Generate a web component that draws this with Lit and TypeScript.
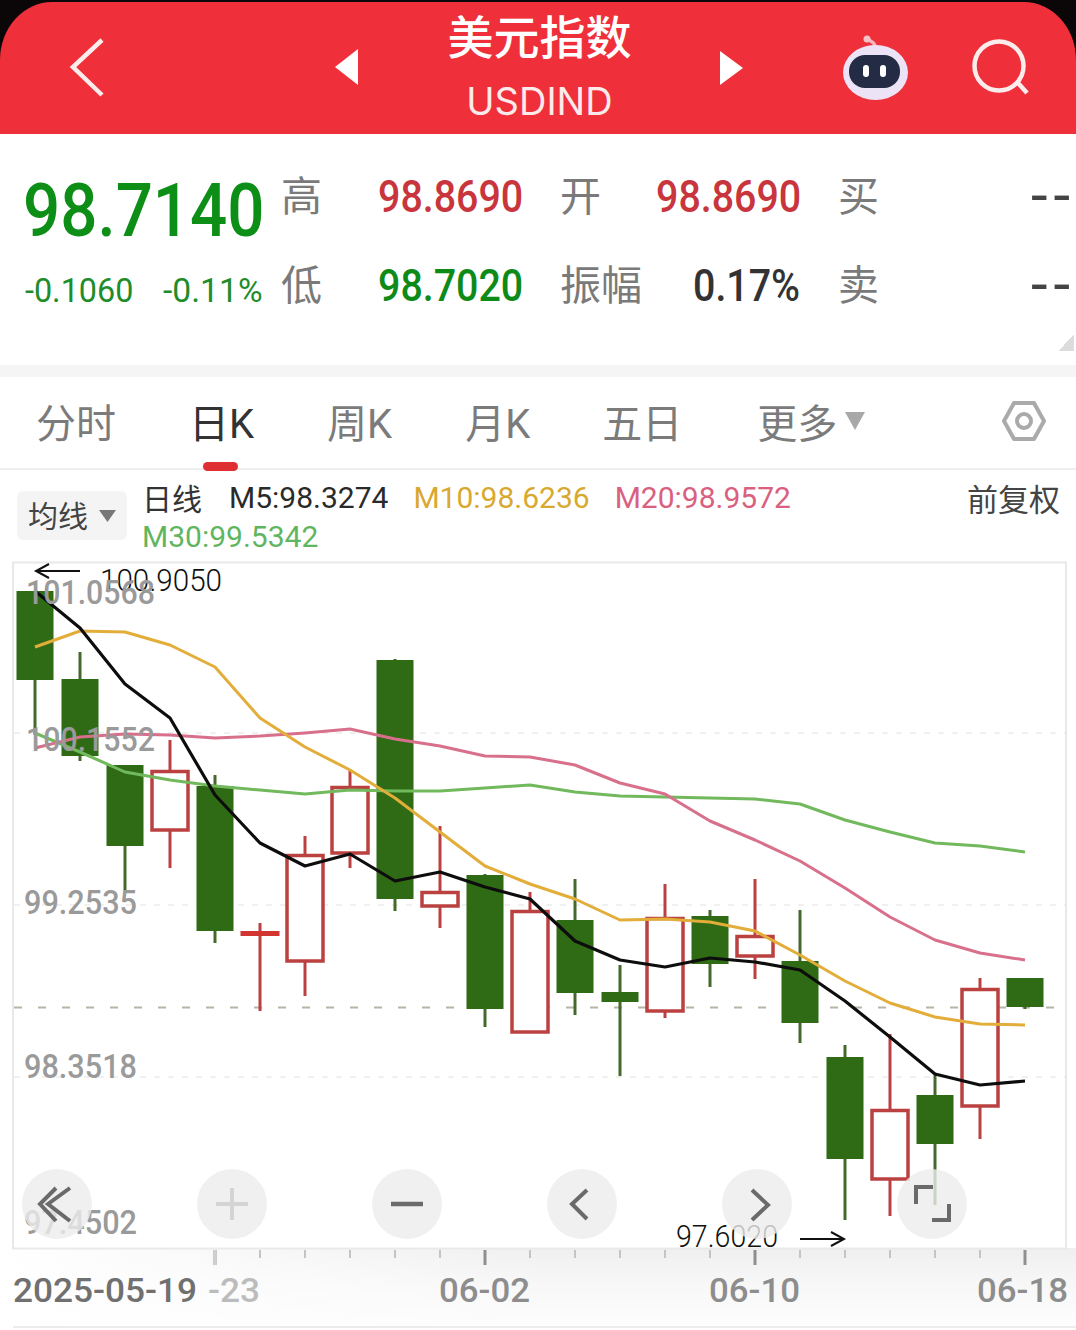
import { LitElement, html, css, svg } from "lit";
import { customElement } from "lit/decorators.js";

type Candle = [number, number, number, number, "g" | "r"];
const candles: Candle[] = [
  [591, 591, 680, 735, "g"],
  [652, 679, 756, 761, "g"],
  [765, 765, 846, 890, "g"],
  [740, 770, 830, 868, "r"],
  [775, 786, 931, 943, "g"],
  [923, 931, 936, 1011, "r"],
  [836, 854, 961, 996, "r"],
  [770, 786, 853, 868, "r"],
  [659, 660, 899, 911, "g"],
  [826, 891, 906, 928, "r"],
  [874, 875, 1009, 1027, "g"],
  [892, 910, 1032, 1032, "r"],
  [879, 920, 993, 1015, "g"],
  [965, 992, 1002, 1076, "g"],
  [884, 917, 1011, 1018, "r"],
  [910, 916, 964, 987, "g"],
  [879, 935, 956, 979, "r"],
  [910, 961, 1023, 1043, "g"],
  [1045, 1057, 1159, 1220, "g"],
  [1034, 1109, 1179, 1216, "r"],
  [1075, 1095, 1144, 1205, "g"],
  [978, 988, 1106, 1139, "r"],
  [978, 978, 1007, 1009, "g"],
];
const cx = (i: number) => 35 + i * 45;
const m5 = [591, 628, 684, 718, 795, 843, 866, 854, 881, 872, 887, 899, 941, 960, 967, 958, 962, 970, 1001, 1037, 1074, 1085, 1081];
const m10 = [647, 631, 632, 645, 667, 718, 747, 770, 798, 832, 866, 884, 899, 920, 919, 922, 931, 955, 981, 1003, 1017, 1024, 1025];
const m20 = [748, 737, 734, 735, 738, 736, 733, 729, 739, 746, 756, 757, 765, 783, 794, 821, 840, 861, 888, 917, 940, 953, 960];
const m30 = [733, 752, 772, 780, 786, 790, 794, 790, 791, 791, 788, 785, 792, 796, 797, 798, 799, 804, 820, 832, 843, 846, 852];
const pts = (a: number[]) => a.map((y, i) => `${cx(i)},${y}`).join(" ");

@customElement("k-chart")
class KChart extends LitElement {
  static styles = css`
    :host { display: block; }
    svg { display: block; }
    .axis { font-family: Roboto, sans-serif; fill: #9a9a9a; font-size: 33px; font-weight: 500; }
    .mark { font-family: Roboto, sans-serif; fill: #111; font-size: 31px; font-weight: 300; }
    .date { font-family: Roboto, sans-serif; fill: #8d8d8d; font-size: 33px; font-weight: 500; }
    .date.dark { fill: #707070; }
    .date.ghost { fill: #bcbcbc; }
  `;
  render() {
    const buttons = [57, 232, 407, 582, 757, 932];
    return html`<svg width="1076" height="770" viewBox="0 560 1076 770">
      <defs>
        <linearGradient id="strip" x1="0" y1="0" x2="0" y2="1">
          <stop offset="0" stop-color="#efefef" />
          <stop offset="0.45" stop-color="#f7f7f7" />
          <stop offset="1" stop-color="#fdfdfd" />
        </linearGradient>
        <linearGradient id="fade" x1="0" y1="0" x2="1" y2="0">
          <stop offset="0" stop-color="#fff" stop-opacity="1" />
          <stop offset="1" stop-color="#fff" stop-opacity="0" />
        </linearGradient>
      </defs>
      <rect x="0" y="1248" width="1076" height="78" fill="url(#strip)" />
      <rect x="0" y="1248" width="560" height="78" fill="url(#fade)" />
      <rect x="13" y="562.5" width="1053" height="686" fill="#fff" stroke="#e9e9e9" stroke-width="2" />
      ${[733, 905, 1077].map(
        (y) => svg`<line x1="14" x2="1065" y1=${y} y2=${y} stroke="#ebebeb" stroke-width="1.5" stroke-dasharray="6 8" />`
      )}
      <line x1="14" x2="1065" y1="1007.5" y2="1007.5" stroke="#b5b5a8" stroke-width="2" stroke-dasharray="8 16" />
      ${candles.map(([hi, top, bot, lo, c], i) => {
        const x = cx(i);
        const col = c === "g" ? "#2f6b14" : "#bb4040";
        const wick = c === "g" ? "#44692c" : "#bb4040";
        const flat = bot - top < 8;
        return svg`
          <line x1=${x} x2=${x} y1=${hi} y2=${lo} stroke=${wick} stroke-width="3" />
          ${c === "g"
            ? svg`<rect x=${x - 18.5} y=${top} width="37" height=${bot - top} fill=${col} />`
            : flat
              ? svg`<rect x=${x - 19.5} y=${top} width="39" height=${bot - top} fill="#d2342f" />`
              : svg`<rect x=${x - 18} y=${top + 1.5} width="36" height=${bot - top - 1.5} fill="#fff" stroke=${col} stroke-width="3.5" />`}
        `;
      })}
      <polyline points=${pts(m30)} fill="none" stroke="#71b95c" stroke-width="3" stroke-linejoin="round" />
      <polyline points=${pts(m20)} fill="none" stroke="#d8708c" stroke-width="3" stroke-linejoin="round" />
      <polyline points=${pts(m10)} fill="none" stroke="#e2ad38" stroke-width="3" stroke-linejoin="round" />
      <polyline points=${pts(m5)} fill="none" stroke="#0d0d0d" stroke-width="3.2" stroke-linejoin="round" />

      <path d="M80 571H36M49 564L36 571L49 578" fill="none" stroke="#111" stroke-width="2" />
      <text class="mark" x="100" y="591" textLength="122" lengthAdjust="spacingAndGlyphs">100.9050</text>
      <text class="mark" x="676" y="1247" textLength="102" lengthAdjust="spacingAndGlyphs">97.6020</text>
      <path d="M800 1239H844M831 1232L844 1239L831 1246" fill="none" stroke="#111" stroke-width="2" />

      <text class="axis" x="26" y="604" textLength="129" lengthAdjust="spacingAndGlyphs">101.0568</text>
      <text class="axis" x="26" y="751" textLength="129" lengthAdjust="spacingAndGlyphs">100.1552</text>
      <text class="axis" x="24" y="914" textLength="113" lengthAdjust="spacingAndGlyphs">99.2535</text>
      <text class="axis" x="24" y="1078" textLength="113" lengthAdjust="spacingAndGlyphs">98.3518</text>
      <text class="axis" x="24" y="1234" textLength="113" lengthAdjust="spacingAndGlyphs">97.4502</text>

      ${candles.map((_, i) => {
        if (i < 4) return null;
        const big = (i - 4) % 6 === 0;
        return svg`<line x1=${cx(i)} x2=${cx(i)} y1="1250" y2=${big ? 1265 : 1258} stroke=${big ? "#8f8f8f" : "#c4c4c4"} stroke-width=${big ? 3 : 2} />`;
      })}
      <line x1="215" x2="215" y1="1250" y2="1265" stroke="#d0d0d0" stroke-width="3" />

      <text class="date dark" x="13" y="1302" textLength="184" lengthAdjust="spacingAndGlyphs">2025-05-19</text>
      <text class="date ghost" x="208" y="1302" textLength="52" lengthAdjust="spacingAndGlyphs">-23</text>
      <text class="date" x="439" y="1302" textLength="91" lengthAdjust="spacingAndGlyphs">06-02</text>
      <text class="date" x="709" y="1302" textLength="91" lengthAdjust="spacingAndGlyphs">06-10</text>
      <text class="date" x="977" y="1302" textLength="91" lengthAdjust="spacingAndGlyphs">06-18</text>
      <line x1="13" x2="1076" y1="1327" y2="1327" stroke="#ececec" stroke-width="2" />

      ${buttons.map((x) => svg`<circle cx=${x} cy="1204" r="35" fill="#ececec" fill-opacity="0.8" />`)}
      <path d="M70 1188L48 1204L70 1221M56 1188L40 1204L56 1221" fill="none" stroke="#6a6a6a" stroke-width="4" />
      <path d="M216 1204H248M232 1188V1220" fill="none" stroke="#d4d4d4" stroke-width="4" />
      <path d="M391 1204H423" fill="none" stroke="#6a6a6a" stroke-width="4.5" />
      <path d="M587 1190L572 1204L587 1219" fill="none" stroke="#6a6a6a" stroke-width="4" />
      <path d="M752 1190L768 1205L752 1220" fill="none" stroke="#6a6a6a" stroke-width="4" />
      <path d="M916 1204V1187H933M949 1204V1220H932" fill="none" stroke="#6a6a6a" stroke-width="4" />
    </svg>`;
  }
}

@customElement("app-root")
export class AppRoot extends LitElement {
  static styles = css`
    :host {
      display: block;
      width: 1076px;
      height: 1330px;
      overflow: hidden;
      background: #fff;
      font-family: Roboto, "Noto Sans CJK SC", sans-serif;
    }
    .top { background: #0b0607; padding-top: 2px; }
    .header {
      height: 132px;
      background: #ef2f3a;
      border-radius: 52px 52px 0 0 / 58px 58px 0 0;
      display: flex;
      color: #fff;
    }
    .header svg { display: block; flex: none; }
    .back { margin: 35px 0 0 68px; }
    .tl { margin: 47px 0 0 229px; }
    .title { width: 361px; text-align: center; flex: none; padding-top: 11px; }
    .cn { font-size: 46px; line-height: 50px; font-weight: 500; }
    .en { font-size: 38px; line-height: 44px; margin-top: 16px; color: #fdeaea; font-family: Inter, Roboto, sans-serif; }
    .tr { margin: 49px 0 0 0; }
    .robot { margin: 32px 0 0 100px; }
    .search { margin: 36px 0 0 63px; }

    .quote { height: 231px; display: flex; padding-left: 23px; box-sizing: border-box; position: relative; }
    .left { width: 258px; flex: none; padding-top: 37px; }
    .price { font-size: 74px; line-height: 80px; font-weight: 500; color: #0d8f17; transform: scaleX(0.885); transform-origin: left; white-space: nowrap; }
    .sub { margin-top: 20px; padding-left: 2px; display: flex; gap: 28px; height: 40px; color: #218c2a; font-size: 33px; line-height: 40px; }
    .s1, .s2 { display: block; white-space: nowrap; transform-origin: left; }
    .s1 { width: 110px; transform: scaleX(0.98); }
    .s2 { width: 100px; transform: scaleX(1.02); }
    .grid {
      display: grid;
      grid-template-columns: 97px 182px 96px 182px 193px 45px;
      grid-auto-rows: 89px;
      align-items: center;
      padding-top: 18px;
      align-content: start;
      white-space: nowrap;
    }
    .lbl { font-size: 41px; color: #7a7a7a; margin-bottom: 8px; }
    .val { font-size: 45px; font-weight: 500; transform: scaleX(0.875); transform-origin: left; }
    .red { color: #c9353c; }
    .green { color: #0e8a18; }
    .ink { color: #333; margin-left: 37px; }
    .dash { font-size: 60px; line-height: 62px; color: #444; letter-spacing: 6px; margin-bottom: 2px; }
    .corner { position: absolute; right: 2px; bottom: 14px; width: 16px; height: 16px; background: linear-gradient(135deg, transparent 50%, #dcdcdc 50%); }

    .gap { height: 12px; background: #f5f5f5; }

    .tabs { height: 93px; display: flex; align-items: center; gap: 73px; padding: 0 0 4px 36px; border-bottom: 2px solid #eee; box-sizing: border-box; font-size: 40px; color: #7b7b7b; position: relative; }
    .tab { position: relative; white-space: nowrap; }
    .tab.on { color: #333; }
    .tab.on::after { content: ""; position: absolute; left: 14px; bottom: -21px; width: 35px; height: 9px; border-radius: 5px; background: #df2f32; }
    .tab.five { margin-left: -1px; }
    .more { display: flex; align-items: center; gap: 8px; margin-left: 2px; }
    .gear { margin-left: auto; margin-right: 30px; display: block; }

    .legend { height: 90px; padding: 8px 16px 0 17px; display: flex; box-sizing: border-box; }
    .picker { width: 110px; height: 49px; margin-top: 13px; background: #f4f4f4; border-radius: 6px; display: flex; align-items: center; padding: 0 0 4px 11px; box-sizing: border-box; font-size: 30px; color: #444; gap: 11px; flex: none; }
    .picker svg { display: block; margin-top: 4px; }
    .info { flex: 1; margin-left: 15px; }
    .row { display: flex; align-items: center; height: 38px; font-size: 30px; white-space: nowrap; }
    .row + .row { margin-top: 1px; }
    .row b { font-weight: 400; }
    .day { color: #333; margin-right: 27px; }
    .c5 { color: #2a2a2a; margin-right: 25px; }
    .c10 { color: #d9a92f; margin-right: 25px; }
    .c20 { color: #d9607f; }
    .c30 { color: #5fb65f; }
    .fq { margin-left: auto; color: #444; font-size: 31px; }
  `;

  render() {
    return html`
      <div class="top">
        <header class="header">
          <svg class="back" width="38" height="62" viewBox="0 0 38 62"><path d="M34 3L5 30L34 58" fill="none" stroke="#fdecec" stroke-width="4.5" /></svg>
          <svg class="tl" width="24" height="36" viewBox="0 0 24 36"><path d="M0 18L23 0V36Z" fill="#fff" /></svg>
          <div class="title">
            <div class="cn">美元指数</div>
            <div class="en">USDIND</div>
          </div>
          <svg class="tr" width="23" height="34" viewBox="0 0 23 34"><path d="M23 17L0 0V34Z" fill="#fff" /></svg>
          <svg class="robot" width="66" height="68" viewBox="0 0 66 68">
            <path d="M32 13C32 7 27 8 25 5" fill="none" stroke="#f5b8bf" stroke-width="3.5" stroke-linecap="round" />
            <circle cx="24" cy="5" r="3.5" fill="#f5c3c8" />
            <ellipse cx="32.5" cy="38.5" rx="32.5" ry="27.5" fill="#ece4f6" />
            <rect x="6" y="21" width="51" height="33" rx="16" fill="#232c44" />
            <rect x="20" y="31" width="6" height="12" rx="3" fill="#fff" />
            <rect x="37" y="31" width="6" height="12" rx="3" fill="#fff" />
          </svg>
          <svg class="search" width="60" height="62" viewBox="0 0 60 62">
            <circle cx="27" cy="28" r="24.5" fill="none" stroke="#fdecec" stroke-width="4.5" />
            <path d="M46 45L55 55" stroke="#fdecec" stroke-width="4.5" />
          </svg>
        </header>
      </div>

      <section class="quote">
        <div class="left">
          <div class="price">98.7140</div>
          <div class="sub"><span class="s1">-0.1060</span><span class="s2">-0.11%</span></div>
        </div>
        <div class="grid">
          <span class="lbl">高</span><span class="val red">98.8690</span>
          <span class="lbl">开</span><span class="val red">98.8690</span>
          <span class="lbl">买</span><span class="dash">--</span>
          <span class="lbl">低</span><span class="val green">98.7020</span>
          <span class="lbl">振幅</span><span class="val ink">0.17%</span>
          <span class="lbl">卖</span><span class="dash">--</span>
        </div>
        <div class="corner"></div>
      </section>

      <div class="gap"></div>

      <nav class="tabs">
        <span class="tab">分时</span>
        <span class="tab on">日K</span>
        <span class="tab">周K</span>
        <span class="tab">月K</span>
        <span class="tab five">五日</span>
        <span class="tab more">更多<svg width="20" height="18" viewBox="0 0 20 18"><path d="M0 0H20L10 18Z" fill="#a8a8a8" /></svg></span>
        <svg class="gear" width="44" height="42" viewBox="0 0 44 42">
          <path d="M2 21L12 3H32L42 21L32 39H12Z" fill="none" stroke="#aaa" stroke-width="4" stroke-linejoin="round" />
          <circle cx="22" cy="21" r="7" fill="none" stroke="#aaa" stroke-width="4" />
        </svg>
      </nav>

      <div class="legend">
        <div class="picker">均线<svg width="17" height="12" viewBox="0 0 17 12"><path d="M0 0H17L8.5 12Z" fill="#777" /></svg></div>
        <div class="info">
          <div class="row">
            <span class="day">日线</span>
            <b class="c5">M5:98.3274</b>
            <b class="c10">M10:98.6236</b>
            <b class="c20">M20:98.9572</b>
            <span class="fq">前复权</span>
          </div>
          <div class="row"><b class="c30">M30:99.5342</b></div>
        </div>
      </div>

      <k-chart></k-chart>
    `;
  }
}
